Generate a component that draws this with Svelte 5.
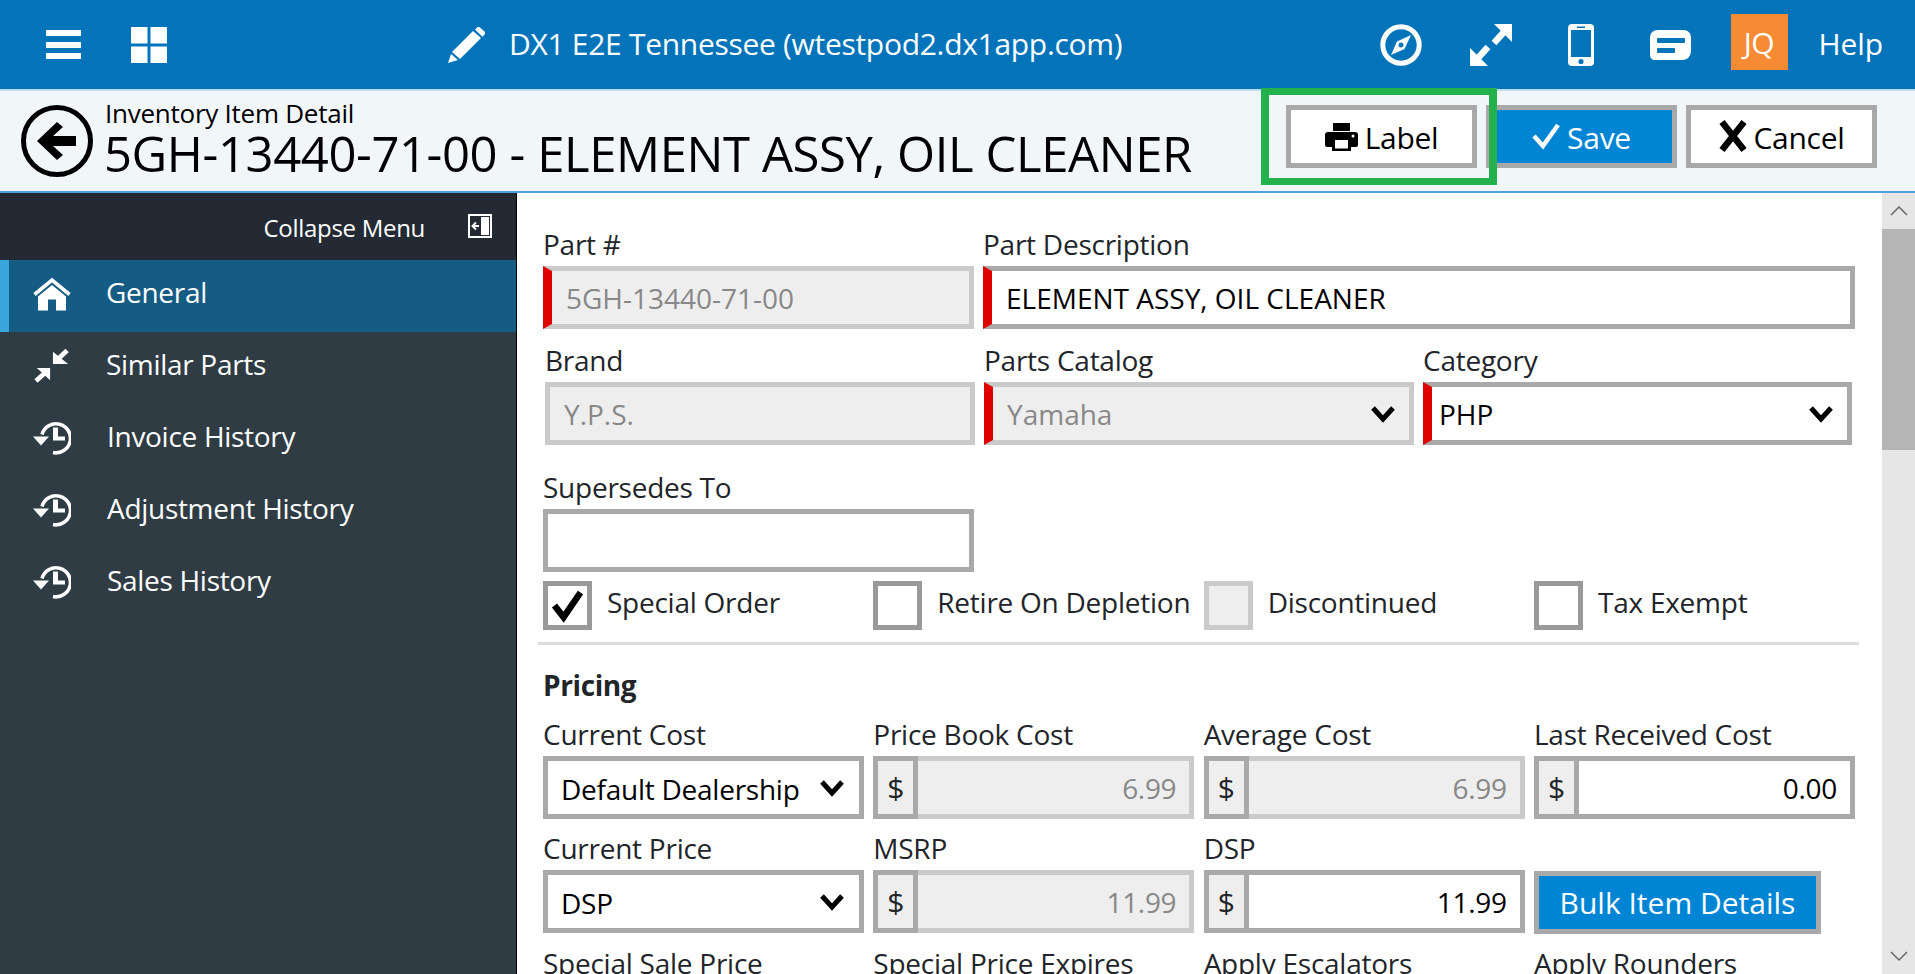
<script>
  const nav = [
    { label: 'Similar Parts', icon: 'compress' },
    { label: 'Invoice History', icon: 'history' },
    { label: 'Adjustment History', icon: 'history' },
    { label: 'Sales History', icon: 'history' }
  ];
  const checks = [
    { label: 'Special Order', checked: true },
    { label: 'Retire On Depletion' },
    { label: 'Discontinued', disabled: true },
    { label: 'Tax Exempt' }
  ];
  const row1 = [
    { label: 'Current Cost', select: 'Default Dealership' },
    { label: 'Price Book Cost', value: '6.99', disabled: true },
    { label: 'Average Cost', value: '6.99', disabled: true },
    { label: 'Last Received Cost', value: '0.00' }
  ];
  const row2 = [
    { label: 'Current Price', select: 'DSP' },
    { label: 'MSRP', value: '11.99', disabled: true },
    { label: 'DSP', value: '11.99' },
    { button: 'Bulk Item Details' }
  ];
  const row3 = ['Special Sale Price', 'Special Price Expires', 'Apply Escalators', 'Apply Rounders'];
</script>

{#snippet chevron()}
  <svg class="chev" viewBox="0 0 24 18"><path d="M2 3l10 11L22 3" fill="none" stroke="#000" stroke-width="5"/></svg>
{/snippet}

{#snippet money(f)}
  <div class="money" class:off={f.disabled}>
    <span class="addon">$</span>
    <span class="amount">{f.value}</span>
  </div>
{/snippet}

{#snippet historyIcon()}
  <svg class="nav-icon" viewBox="0 0 38 33">
    <path d="M9 13A14.500 14.500 0 1 1 20 31" fill="none" stroke="#fff" stroke-width="3.600"/>
    <path d="M0 15h16l-8 9z" fill="#fff"/>
    <path d="M20 6h5v9h7v4H20z" fill="#fff"/>
  </svg>
{/snippet}

<div class="page">
  <header class="topbar">
    <svg class="hamburger" viewBox="0 0 35 29"><path d="M0 0h35v6H0zM0 12h35v6H0zM0 23h35v6H0z" fill="#fff"/></svg>
    <svg class="apps" viewBox="0 0 36 36"><path d="M0 0h16.500v16.500H0zM19.500 0H36v16.500H19.500zM0 19.500h16.500V36H0zM19.500 19.500H36V36H19.500z" fill="#fff"/></svg>
    <svg class="pencil" viewBox="0 0 37 36"><path d="M25 4l8 7L12 32l-8-7zM27 2.500l2-2c1-.8 2-.8 3 0l4.500 4c.8 1 .8 2 0 3l-2 2.200zM3 27l7 6-10 3z" fill="#fff"/></svg>
    <span class="site">DX1 E2E Tennessee (wtestpod2.dx1app.com)</span>
    <div class="top-right">
      <svg class="t-compass" viewBox="0 0 42 42"><circle cx="21" cy="21" r="18.200" fill="none" stroke="#fff" stroke-width="5"/><path d="M31 11l-6.500 14L11 31l6-13.500zM21 18.500a2.500 2.500 0 1 0 .01 0z" fill="#fff" fill-rule="evenodd"/></svg>
      <svg class="t-expand" viewBox="0 0 42 42"><path d="M24 0h18v18zM0 42V24l18 18z" fill="#fff"/><path d="M34 8L24 19M8 34l10-11" stroke="#fff" stroke-width="6.500"/></svg>
      <svg class="t-phone" viewBox="0 0 26 42"><rect width="26" height="42" rx="4" fill="#fff"/><rect x="3" y="6" width="20" height="27" fill="#0374b9"/><circle cx="13" cy="37.500" r="2.600" fill="#0374b9"/><rect x="9" y="2.500" width="8" height="1.500" fill="#0374b9"/></svg>
      <svg class="t-chat" viewBox="0 0 41 30"><path d="M8 0h25c5 0 8 3 8 8v12c0 6-3 10-9 10H5c-3 0-5-2-5-5V8c0-5 3-8 8-8z" fill="#fff"/><rect x="7" y="8" width="28" height="5" rx="1" fill="#0374b9"/><rect x="7" y="18" width="18" height="5" rx="1" fill="#0374b9"/></svg>
      <span class="avatar">JQ</span>
      <span class="help">Help</span>
    </div>
  </header>

  <section class="subbar">
    <svg class="back" viewBox="0 0 72 72"><circle cx="36" cy="36" r="33.500" fill="none" stroke="#000" stroke-width="5"/><path d="M36 17l6 5-10 9h23v10H32l10 9-6 5-20-19z"/></svg>
    <div class="titles">
      <div class="kicker">Inventory Item Detail</div>
      <h1>5GH-13440-71-00 - ELEMENT ASSY, OIL CLEANER</h1>
    </div>
    <div class="actions">
      <button class="btn">
        <svg class="i-print" viewBox="0 0 33 28"><path d="M8 0h17v8H8zM3 9h27c2 0 3 1 3 3v10c0 1-1 2-2 2h-5v4H7v-4H2c-1 0-2-1-2-2V12c0-2 1-3 3-3z"/><path d="M10 17h13v8.500H10z" fill="#fff"/><circle cx="28" cy="13" r="1.500" fill="#fff"/></svg>
        Label
      </button>
      <button class="btn primary">
        <svg class="i-check" viewBox="0 0 28 28"><path d="M2 14l9 10L26 3" fill="none" stroke="#fff" stroke-width="4.500"/></svg>
        Save
      </button>
      <button class="btn">
        <svg class="i-x" viewBox="0 0 28 34"><path d="M3 3l22 28M25 3L3 31" fill="none" stroke="#000" stroke-width="6.500"/></svg>
        Cancel
      </button>
    </div>
    <div class="highlight"></div>
  </section>

  <div class="body">
    <aside class="sidebar">
      <div class="collapse">
        <span>Collapse Menu</span>
        <svg class="i-collapse" viewBox="0 0 24 24"><rect x="1" y="1" width="22" height="22" fill="none" stroke="#fff" stroke-width="2"/><rect x="13" y="3" width="8" height="18" fill="#fff"/><path d="M11 12H5M8 8.500L4.500 12 8 15.500" fill="none" stroke="#fff" stroke-width="2"/></svg>
      </div>
      <a class="item active" href="#general">
        <svg class="nav-icon" viewBox="0 0 38 33"><path d="M1.500 17L19 2.500 36.500 17" fill="none" stroke="#fff" stroke-width="3.600"/><path d="M5 19L19 7.500 33 19v14H23V22h-8v11H5z" fill="#fff"/></svg>
        <span>General</span>
      </a>
      {#each nav as n}
        <a class="item" href="#section">
          {#if n.icon === 'compress'}
            <svg class="nav-icon" viewBox="0 0 38 36"><path d="M20 3v13h16zM17 20v13L3 20z" fill="#fff"/><path d="M25 11L35 1.500M12 25L2 34" stroke="#fff" stroke-width="5"/></svg>
          {:else}
            {@render historyIcon()}
          {/if}
          <span class:shift={n.icon === 'history'}>{n.label}</span>
        </a>
      {/each}
    </aside>

    <main class="main">
      <div class="form">
        <div class="row r-top">
          <div class="field">
            <label>Part #</label>
            <div class="box req off">5GH-13440-71-00</div>
          </div>
          <div class="field">
            <label>Part Description</label>
            <div class="box req">ELEMENT ASSY, OIL CLEANER</div>
          </div>
        </div>

        <div class="row r-mid">
          <div class="field">
            <label>Brand</label>
            <div class="box off">Y.P.S.</div>
          </div>
          <div class="field">
            <label>Parts Catalog</label>
            <div class="box req off sel">Yamaha {@render chevron()}</div>
          </div>
          <div class="field">
            <label>Category</label>
            <div class="box req sel tight">PHP {@render chevron()}</div>
          </div>
        </div>

        <div class="row r-top single">
          <div class="field">
            <label>Supersedes To</label>
            <div class="box"></div>
          </div>
        </div>

        <div class="grid4 checks">
          {#each checks as c}
            <div class="check">
              <span class="tick" class:dis={c.disabled}>
                {#if c.checked}
                  <svg viewBox="0 0 30 30"><path d="M5 15l7 9L25 5" fill="none" stroke="#000" stroke-width="5"/></svg>
                {/if}
              </span>
              <span class="check-text">{c.label}</span>
            </div>
          {/each}
        </div>

        <hr />
        <h2>Pricing</h2>

        <div class="grid4">
          {#each row1 as f}
            <div class="field">
              <label>{f.label}</label>
              {#if f.select}
                <div class="box sel price">{f.select} {@render chevron()}</div>
              {:else}
                {@render money(f)}
              {/if}
            </div>
          {/each}
          {#each row2 as f}
            <div class="field">
              {#if f.button}
                <label>&nbsp;</label>
                <button class="bulk">{f.button}</button>
              {:else}
                <label>{f.label}</label>
                {#if f.select}
                  <div class="box sel price">{f.select} {@render chevron()}</div>
                {:else}
                  {@render money(f)}
                {/if}
              {/if}
            </div>
          {/each}
          {#each row3 as l}
            <div class="field"><label>{l}</label></div>
          {/each}
        </div>
      </div>

      <div class="scroll">
        <div class="sb-btn"><svg viewBox="0 0 20 12"><path d="M2 10l8-8 8 8" fill="none" stroke="#666" stroke-width="1.500"/></svg></div>
        <div class="sb-thumb"></div>
        <div class="sb-fill"></div>
        <div class="sb-btn"><svg viewBox="0 0 20 12"><path d="M2 2l8 8 8-8" fill="none" stroke="#666" stroke-width="1.500"/></svg></div>
      </div>
    </main>
  </div>
</div>

<style>
  :global(body) { margin: 0; background: #fff; }
  .page {
    width: 1915px; height: 974px; overflow: hidden; display: flex; flex-direction: column;
    font-family: "Open Sans", "Noto Sans", sans-serif; font-size: 28px; color: #212529;
    letter-spacing: -0.1px;
  }
  .topbar {
    height: 89px; flex: none; background: #0374b9; color: #fff; display: flex; align-items: center;
    box-sizing: border-box; padding-left: 46px;
  }
  .hamburger { width: 35px; height: 29px; margin-right: 50px; }
  .apps { width: 36px; height: 36px; margin-right: 281px; }
  .pencil { width: 37px; height: 36px; margin-right: 24px; }
  .site { font-size: 30px; letter-spacing: -0.3px; white-space: nowrap; margin-top: -2px; }
  .top-right { margin-left: auto; display: flex; align-items: center; height: 100%; }
  .t-compass { width: 42px; height: 42px; margin-right: 48px; }
  .t-expand { width: 42px; height: 42px; margin-right: 56px; }
  .t-phone { width: 26px; height: 42px; margin-right: 56px; }
  .t-chat { width: 41px; height: 30px; margin-right: 40px; }
  .avatar {
    width: 57px; height: 56px; background: #f68b33; display: flex; align-items: center; justify-content: center;
    font-size: 30px; margin: -5px 31px 0 0; letter-spacing: -0.5px;
  }
  .help { font-size: 30px; margin: -2px 32px 0 0; }

  .subbar {
    height: 104px; flex: none; box-sizing: border-box; background: #f1f6f9;
    border-top: 2px solid #bcdcf0; border-bottom: 2px solid #4fa3dc;
    display: flex; position: relative; padding-left: 21px;
  }
  .back { width: 72px; height: 72px; margin-top: 14px; margin-right: 12px; flex: none; }
  .titles { margin-top: 5px; color: #000; }
  .kicker { font-size: 26px; line-height: 34px; letter-spacing: -0.25px; }
  h1 { font-size: 49px; font-weight: 400; line-height: 58px; margin: -6px 0 0 -1px; letter-spacing: -0.4px; white-space: nowrap; }
  .actions { margin-left: auto; display: flex; gap: 9px; margin-right: 38px; margin-top: 14px; }
  .btn {
    width: 191px; height: 63px; box-sizing: border-box; border: 5px solid #a9a9a9; background: #fff; color: #000;
    font: inherit; font-size: 30px; letter-spacing: -0.3px; display: flex; align-items: center; justify-content: center; gap: 7px; padding: 2px 0 0;
  }
  .btn.primary { background: #0085d4; color: #fff; }
  .i-print { width: 33px; height: 28px; margin-top: -2px; }
  .i-check { width: 28px; height: 28px; margin-top: -4px; }
  .i-x { width: 28px; height: 34px; margin-top: -4px; }
  .highlight {
    position: absolute; left: 1261px; top: -3px; width: 236px; height: 97px; box-sizing: border-box;
    border: 7px solid #22b14c; border-width: 7px 8px;
  }

  .body { flex: 1; display: flex; min-height: 0; }
  .sidebar { width: 516px; flex: none; background: #2f3c44; border-right: 1px solid #000; }
  .collapse {
    height: 67px; background: #232a33; color: #fff; display: flex; align-items: center; justify-content: flex-end;
    font-size: 24px; letter-spacing: -0.3px; padding-right: 24px; box-sizing: border-box;
  }
  .collapse span { margin: 2px 43px 0 0; }
  .i-collapse { width: 24px; height: 24px; margin-top: -2px; }
  .item {
    height: 72px; display: flex; align-items: center; color: #fff; text-decoration: none; box-sizing: border-box;
    padding: 0 0 4px 33px; letter-spacing: -0.3px;
  }
  .item span { margin-bottom: 4px; }
  .item.active { background: #155c85; border-left: 9px solid #3aa6dd; padding-left: 24px; }
  .nav-icon { width: 38px; height: 34px; margin-right: 35px; flex: none; }
  .shift { margin-left: 1px; }

  .main { flex: 1; display: flex; min-width: 0; }
  .form { flex: 1; padding: 39px 0 0 26px; box-sizing: border-box; min-width: 0; }
  .row { display: grid; }
  .r-top { grid-template-columns: 431px 872px; gap: 9px; }
  .r-mid { grid-template-columns: 430px 430px 429px; gap: 9px; margin: 19px 0 0 2px; }
  .single { margin-top: 30px; }
  .grid4 { display: grid; grid-template-columns: repeat(4, 321px); column-gap: 9.33px; row-gap: 17px; }
  .checks { margin-top: 9px; }
  label { display: block; height: 34px; line-height: 25px; white-space: nowrap; letter-spacing: -0.25px; }
  .box {
    height: 63px; box-sizing: border-box; border: 5px solid #a9a9a9; background: #fff; color: #000;
    display: flex; align-items: center; padding: 1px 14px 0 14px; white-space: nowrap; letter-spacing: 0;
  }
  .box.req { border-left: 9px solid #e00000; }
  .box.off { background: #eee; border-color: #cacaca; color: #888; }
  .box.req.off { border-left-color: #e00000; }
  .sel { justify-content: space-between; padding-right: 14px; }
  .tight { padding-left: 7px; }
  .chev { width: 24px; height: 18px; flex: none; }
  .price { padding-left: 13px; padding-right: 15px; padding-top: 3px; letter-spacing: -0.25px; }
  .price .chev { margin-top: -3px; }

  .check { display: flex; align-items: center; height: 49px; gap: 15px; white-space: nowrap; letter-spacing: -0.25px; }
  .check-text { margin-top: -8px; }
  .tick { width: 49px; height: 49px; box-sizing: border-box; border: 5px solid #999; background: #fff; display: block; flex: none; }
  .tick.dis { background: #eee; border-color: #cacaca; }
  .tick svg { display: block; width: 39px; height: 39px; }

  hr { border: 0; height: 3px; background: #ddd; margin: 12px 23px 0 -5px; }
  h2 { font-size: 28px; font-weight: 700; line-height: 34px; margin: 23px 0 20px; letter-spacing: -0.4px; color: #212529; }

  .money {
    display: flex; height: 63px; box-sizing: border-box; border: 5px solid #a9a9a9; background: #fff; color: #000;
  }
  .money.off { background: #eee; border-color: #cacaca; color: #888; }
  .addon {
    margin: -5px 0 -5px -5px; flex: none; background: #eee; color: #212529; font-size: 30px;
    border: 5px solid #a9a9a9; box-sizing: border-box; width: 45px; display: flex; align-items: center; justify-content: center;
  }
  .amount { flex: 1; display: flex; align-items: center; justify-content: flex-end; padding-right: 13px; letter-spacing: -0.3px; }
  .bulk {
    display: block; width: 287px; height: 63px; margin-top: 1px; box-sizing: border-box; border: 5px solid #a9a9a9;
    background: #0085d4; color: #fff; font: inherit; font-size: 30px; letter-spacing: 0; padding: 0;
  }

  .scroll { width: 33px; flex: none; background: #e6e6e6; display: flex; flex-direction: column; }
  .sb-btn { height: 36px; flex: none; display: flex; align-items: center; justify-content: center; }
  .sb-btn svg { width: 20px; height: 12px; }
  .sb-thumb { height: 221px; flex: none; background: #b5b5b5; }
  .sb-fill { flex: 1; }
</style>
